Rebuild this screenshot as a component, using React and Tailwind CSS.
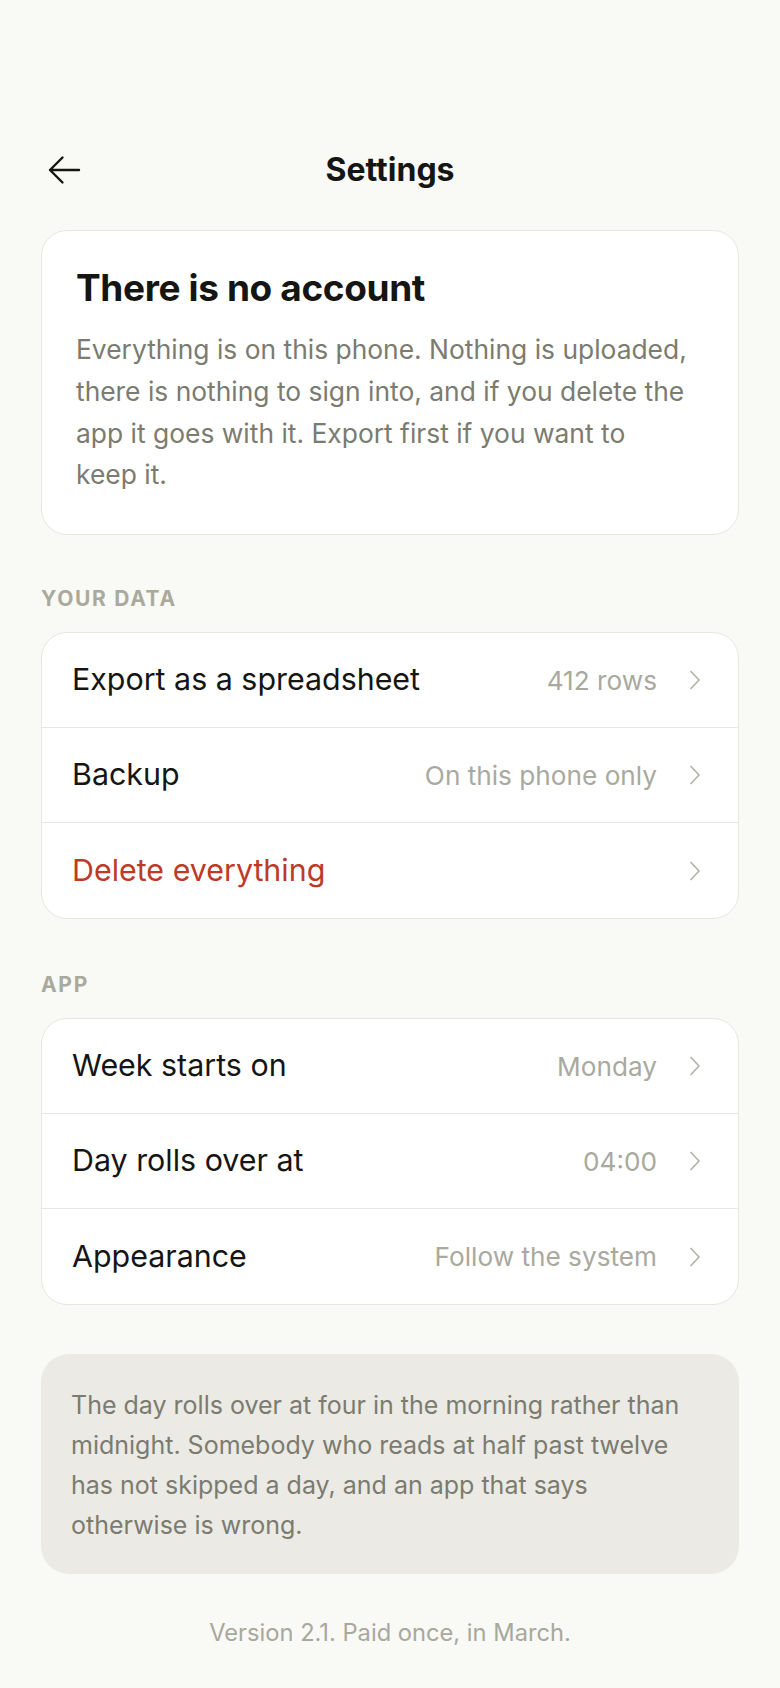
import React from 'react';

const font = { fontFamily: 'Inter, "Noto Sans", sans-serif' };

function Chevron() {
  return (
    <svg width="12" height="20" viewBox="0 0 12 20" fill="none" className="shrink-0">
      <path d="M2 1.5 L10 10 L2 18.5" stroke="#b3b3ab" strokeWidth="1.7" strokeLinecap="round" strokeLinejoin="round" />
    </svg>
  );
}

function Row({ label, value, danger, last }) {
  return (
    <div className={`flex items-center h-[95px] pl-[30px] pr-[37px] ${last ? '' : 'border-b border-[#e7e6e1]'}`}>
      <span className={`flex-1 text-[30.4px] ${danger ? 'text-[#bd3a26]' : 'text-[#151513]'}`}>{label}</span>
      {value && <span className="text-[26.2px] text-[#a9a9a0] mr-[32px]">{value}</span>}
      <Chevron />
    </div>
  );
}

function Section({ title, rows, top }) {
  return (
    <div>
      <div className={`${top} mb-[21px] text-[21px] leading-[24px] font-bold tracking-[0.08em] text-[#aaaa9c]`}>{title}</div>
      <div className="bg-white rounded-[26px] border border-[#e7e6e1] overflow-hidden">
        {rows.map((r, i) => (
          <Row key={r.label} {...r} last={i === rows.length - 1} />
        ))}
      </div>
    </div>
  );
}

export default function App() {
  return (
    <div style={font} className="min-h-[1688px] bg-[#f9f9f6] px-[41px] pt-[142px] pb-[40px]">
      {/* Header */}
      <div className="relative h-[56px] flex items-center justify-center">
        <button className="absolute left-[6px] top-[13px]">
          <svg width="34" height="30" viewBox="0 0 34 30" fill="none">
            <path d="M32 15 H3 M15.5 2.5 L3 15 L15.5 27.5" stroke="#151513" strokeWidth="2.4" strokeLinecap="round" strokeLinejoin="round" />
          </svg>
        </button>
        <h1 className="text-[32px] font-bold text-[#151513]">Settings</h1>
      </div>

      {/* No account card */}
      <div className="mt-[32px] bg-white rounded-[26px] border border-[#e7e6e1] pt-[35px] pl-[34px] pr-[50px] pb-[38px]">
        <h2 className="text-[37px] leading-[43px] font-bold tracking-[-0.01em] text-[#151513]">There is no account</h2>
        <p className="mt-[20px] text-[26.4px] leading-[41.8px] text-[#7b7b70]">
          Everything is on this phone. Nothing is uploaded, there is nothing to sign into, and if you delete the app it goes with it. Export first if you want to keep it.
        </p>
      </div>

      <Section
        title="YOUR DATA"
        top="mt-[52px]"
        rows={[
          { label: 'Export as a spreadsheet', value: '412 rows' },
          { label: 'Backup', value: 'On this phone only' },
          { label: 'Delete everything', danger: true },
        ]}
      />

      <Section
        title="APP"
        top="mt-[54px]"
        rows={[
          { label: 'Week starts on', value: 'Monday' },
          { label: 'Day rolls over at', value: '04:00' },
          { label: 'Appearance', value: 'Follow the system' },
        ]}
      />

      {/* Note */}
      <div className="mt-[49px] bg-[#ebeae4] rounded-[28px] pl-[30px] pr-[29px] pt-[31px] pb-[29px]">
        <p className="text-[25px] leading-[40px] text-[#7b7b70]">
          The day rolls over at four in the morning rather than midnight. Somebody who reads at half past twelve has not skipped a day, and an app that says otherwise is wrong.
        </p>
      </div>

      <p className="mt-[45px] text-center text-[23.7px] leading-[28px] text-[#a8a89c]">Version 2.1. Paid once, in March.</p>
    </div>
  );
}
